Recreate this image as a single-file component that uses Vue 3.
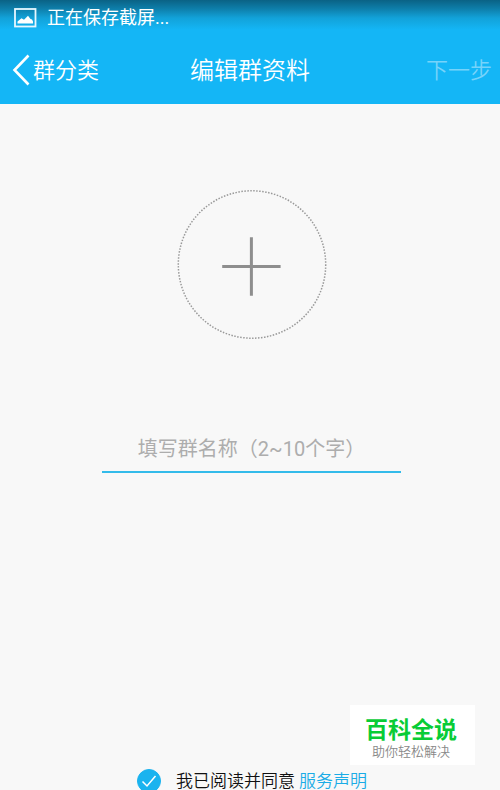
<script setup>
import { ref } from 'vue'

const groupName = ref('')
const agreed = ref(true)
</script>

<template>
  <div class="page" lang="zh-CN">
    <header class="top">
      <div class="status">
        <svg class="picture" viewBox="0 0 24 20" aria-hidden="true">
          <rect x="1" y="1" width="20.500" height="17.500" fill="none" stroke="#e6f7ff" stroke-width="1.800" />
          <path d="M3.500 15.500v-2l4-3.200 2.500 1.500 4-4 2.500 3.200 1.500 0.500 1 2v2z" fill="#fff" />
        </svg>
        <span>正在保存截屏...</span>
      </div>
      <nav class="bar">
        <button class="back" type="button">
          <svg class="chevron" viewBox="0 0 18 32" aria-hidden="true">
            <path d="M16.500 1.500 2.500 16l14 14.500" fill="none" stroke="#fff" stroke-width="2.600" />
          </svg>
          <span class="text">群分类</span>
        </button>
        <h1 class="title text">编辑群资料</h1>
        <button class="next text" type="button">下一步</button>
      </nav>
    </header>

    <main class="content">
      <button class="avatar" type="button" aria-label="+">
        <svg viewBox="0 0 150 150" aria-hidden="true">
          <circle cx="75" cy="74.500" r="73.700" fill="none" stroke="#999" stroke-width="1.500" stroke-dasharray="1.500 1.500" />
          <path d="M74.400 47.300v58.400M45.200 76.500h58.400" fill="none" stroke="#8e8e8e" stroke-width="3" />
        </svg>
      </button>
      <input v-model="groupName" class="name" type="text" maxlength="10" placeholder="填写群名称（2~10个字）" aria-label="填写群名称" />
    </main>

    <footer class="terms">
      <label class="agree">
        <span class="tick">
          <input v-model="agreed" type="checkbox" />
          <svg v-if="agreed" viewBox="0 0 24 24" aria-hidden="true">
            <path d="M5.500 12.500l4.500 4.500 8.500-10" fill="none" stroke="#fff" stroke-width="1.500" />
          </svg>
        </span>
        <span>我已阅读并同意</span>
      </label>
      <a class="link" href="#terms">服务声明</a>
    </footer>

    <aside class="badge">
      <strong>百科全说</strong>
      <span>助你轻松解决</span>
    </aside>
  </div>
</template>

<style>
body {
  margin: 0;
  background: #f8f8f8;
}
</style>

<style scoped>
.page {
  position: relative;
  display: flex;
  flex-direction: column;
  height: 100vh;
  overflow: hidden;
  background: #f8f8f8;
  font-family: Roboto, "Noto Sans CJK SC", sans-serif;
  font-weight: 350;
}

button,
input {
  margin: 0;
  padding: 0;
  border: 0;
  background: none;
  font: inherit;
  color: inherit;
}

.top {
  flex: none;
  color: #fff;
  background: linear-gradient(#0a6285 0, #0e7fab 9px, #12a2d9 18px, #14b6f6 30px, #14b6f6 100%);
}

.status {
  display: flex;
  align-items: center;
  gap: 9px;
  height: 35px;
  padding-left: 14px;
  font-size: 18px;
  font-weight: 400;
  line-height: 36px;
}

.picture {
  width: 24px;
  height: 20px;
}

.bar {
  display: grid;
  grid-template-columns: 1fr auto 1fr;
  align-items: center;
  height: 69px;
  padding: 0 8px;
  font-size: 22px;
}

.text {
  padding-bottom: 3px;
}

.back {
  display: flex;
  align-items: center;
  gap: 3px;
  justify-self: start;
  padding-left: 4px;
}

.chevron {
  width: 18px;
  height: 32px;
}

.title {
  margin: 0;
  font-size: 24px;
  font-weight: 350;
}

.next {
  justify-self: end;
  color: #76d3fa;
}

.content {
  flex: 1;
  display: flex;
  flex-direction: column;
  align-items: center;
  gap: 85px;
  padding: 86px 0 0 3px;
}

.avatar {
  display: block;
  width: 150px;
  height: 150px;
  border-radius: 50%;
}

.avatar svg {
  display: block;
}

.name {
  box-sizing: border-box;
  width: 60%;
  height: 48px;
  padding-top: 2px;
  border-bottom: 2px solid #33bbea;
  outline: none;
  font-size: 20px;
  font-weight: 400;
  text-align: center;
  color: #333;
}

.name::placeholder {
  color: #adadad;
  opacity: 1;
}

.terms {
  flex: none;
  display: flex;
  justify-content: center;
  align-items: center;
  gap: 4px;
  height: 24px;
  margin-bottom: -3px;
  padding-left: 4px;
  font-size: 17px;
  line-height: 24px;
  color: #111;
}

.agree {
  display: flex;
  align-items: center;
  gap: 15px;
}

.tick {
  display: grid;
  width: 24px;
  height: 24px;
}

.tick > * {
  grid-area: 1 / 1;
}

.tick input {
  appearance: none;
  border: 1px solid #1ab3ef;
  border-radius: 50%;
}

.tick input:checked {
  background: #1ab3ef;
}

.tick svg {
  pointer-events: none;
}

.link {
  color: #1aace6;
  text-decoration: none;
}

.badge {
  position: absolute;
  right: 25px;
  bottom: 25px;
  display: flex;
  flex-direction: column;
  align-items: center;
  box-sizing: border-box;
  width: 125px;
  height: 60px;
  padding: 12px 3px 0 0;
  background: #fff;
}

.badge strong {
  font-size: 23px;
  font-weight: 700;
  line-height: 27px;
  color: #08cc36;
}

.badge span {
  font-size: 13px;
  line-height: 16px;
  color: #888;
}
</style>
